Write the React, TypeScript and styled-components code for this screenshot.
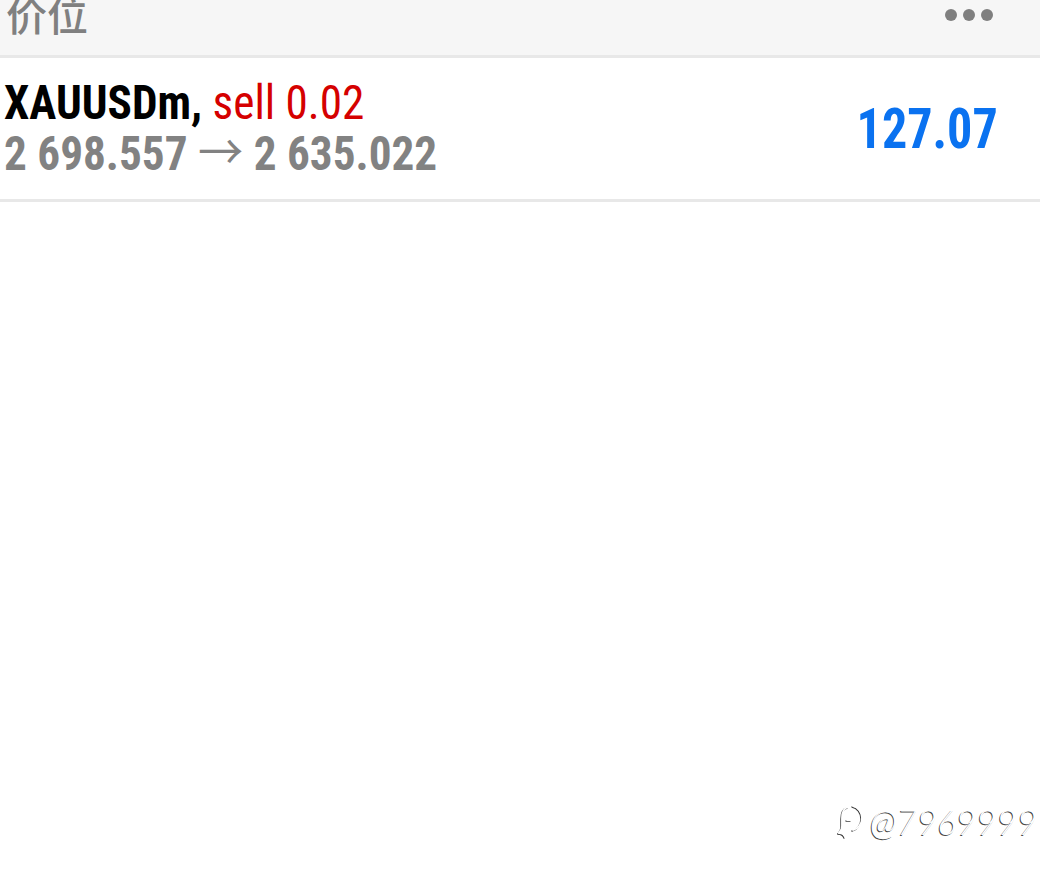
import React from 'react';
import styled, { createGlobalStyle } from 'styled-components';

const GlobalStyle = createGlobalStyle`
  html, body {
    margin: 0;
    padding: 0;
    background: #ffffff;
  }
  body {
    font-family: "Roboto Condensed", Roboto, "Noto Sans CJK SC", sans-serif;
  }
`;

const Page = styled.div`
  width: 1040px;
  height: 872px;
  position: relative;
  overflow: hidden;
  background: #ffffff;
`;

const Header = styled.div`
  height: 55px;
  background: #f6f6f6;
  border-bottom: 3px solid #e8e8e8;
  display: flex;
  align-items: flex-start;
  justify-content: space-between;
  overflow: hidden;
`;

const Title = styled.div`
  font-family: "Noto Sans CJK SC", sans-serif;
  font-size: 41px;
  font-weight: 500;
  line-height: 1;
  color: #808080;
  margin: -7px 0 0 6px;
`;

const Dots = styled.div`
  display: flex;
  gap: 6px;
  margin: 9px 47px 0 0;
`;

const Dot = styled.span`
  width: 12px;
  height: 12px;
  border-radius: 50%;
  background: #7f7f7f;
`;

const Row = styled.div`
  height: 141px;
  border-bottom: 3px solid #e8e8e8;
  display: flex;
  align-items: center;
  justify-content: space-between;
  padding: 0 42px 0 4px;
`;

const Info = styled.div`
  display: flex;
  flex-direction: column;
  margin-top: -1px;
`;

// Roboto Condensed is not available, so plain Roboto is narrowed
const Narrow = styled.span<{ $ratio: number; $origin?: 'left' | 'right' }>`
  display: inline-block;
  transform: scaleX(${p => p.$ratio});
  transform-origin: ${p => p.$origin ?? 'left'} center;
`;

const Line = styled.div<{ $tone?: 'main' | 'muted' }>`
  font-size: 49px;
  line-height: 51px;
  height: 51px;
  font-weight: 700;
  white-space: nowrap;
  color: ${p => (p.$tone === 'muted' ? '#828282' : '#000000')};
`;

const Side = styled.span`
  font-weight: 400;
  color: #d50000;
`;

const Arrow = styled.span`
  font-weight: 400;
`;

const Profit = styled.div`
  font-size: 56px;
  font-weight: 700;
  color: #0a72f0;
  line-height: 1;
`;

const Watermark = styled.div`
  position: absolute;
  left: 836px;
  top: 800px;
  display: flex;
  align-items: center;
  gap: 6px;
  font-family: Lato, "Noto Sans", sans-serif;
  font-weight: 300;
  font-style: italic;
  font-size: 35px;
  color: #ffffff;
  text-shadow: -1px 1px 0 #4a4a4a;
`;

function DouyinMark() {
  const strokes = [
    'M12 5 C8 6 6 10 6 16 L6 24 C6 28 4 30 3 31',
    'M3 31 C5 31 8 32 9 35',
    'M11 18 L15 18',
    'M17 4 C22 5 26 10 26 16 C26 22 22 27 17 28',
  ];
  return (
    <svg width="28" height="38" viewBox="0 0 28 38" fill="none">
      {strokes.map(d => (
        <path key={'s' + d} d={d} stroke="#3c3c3c" strokeWidth="1.4" strokeLinecap="round" transform="translate(-1 1)" />
      ))}
      {strokes.map(d => (
        <path key={'w' + d} d={d} stroke="#ffffff" strokeWidth="1.8" strokeLinecap="round" />
      ))}
    </svg>
  );
}

export default function App() {
  return (
    <Page>
      <GlobalStyle />
      <Header>
        <Title>价位</Title>
        <Dots>
          <Dot />
          <Dot />
          <Dot />
        </Dots>
      </Header>
      <Row>
        <Info>
          <Line $tone="main">
            <Narrow $ratio={0.923}>
              XAUUSDm, <Side>sell 0.02</Side>
            </Narrow>
          </Line>
          <Line $tone="muted">
            <Narrow $ratio={0.923}>
              2 698.557 <Arrow>→</Arrow> 2 635.022
            </Narrow>
          </Line>
        </Info>
        <Profit>
          <Narrow $ratio={0.895} $origin="right">
            127.07
          </Narrow>
        </Profit>
      </Row>
      <Watermark>
        <DouyinMark />
        <span>@7969999</span>
      </Watermark>
    </Page>
  );
}
